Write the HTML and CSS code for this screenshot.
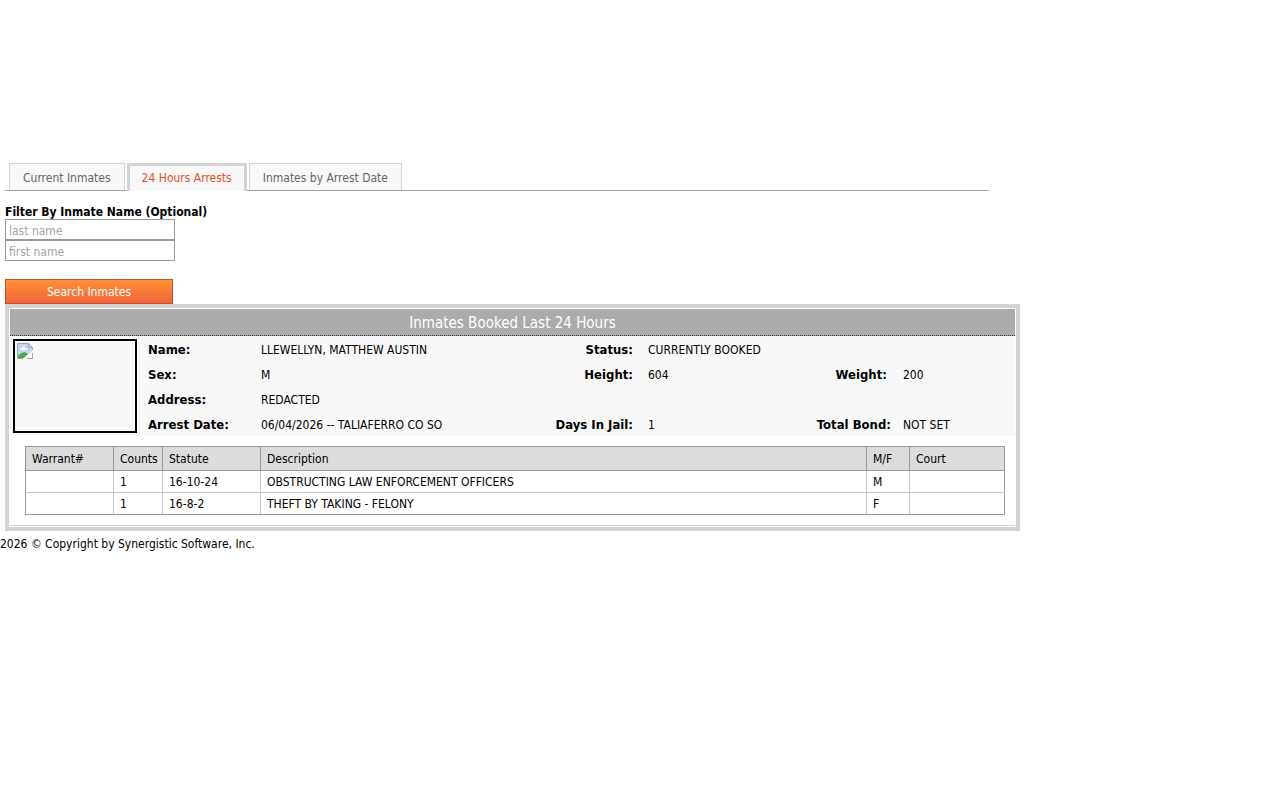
FILE: index.html
```html
<!DOCTYPE html>
<html lang="en">
<head>
    <meta charset="UTF-8">
    <meta name="viewport" content="width=device-width, initial-scale=1.0">
    <title>Inmates Booked Last 24 Hours</title>
    <link rel="stylesheet" href="styles.css">
</head>
<body>
    <main class="content">
        <nav class="tabs">
            <a class="tab" href="#current">Current Inmates</a>
            <a class="tab active" href="#arrests">24 Hours Arrests</a>
            <a class="tab" href="#bydate">Inmates by Arrest Date</a>
        </nav>

        <form class="filter">
            <label class="filter-title" for="lastName">Filter By Inmate Name (Optional)</label>
            <input type="text" id="lastName" name="lastName" placeholder="last name">
            <input type="text" id="firstName" name="firstName" placeholder="first name" aria-label="first name">
            <button class="search" type="submit">Search Inmates</button>
        </form>

        <section class="panel" id="arrests">
            <h1 class="panel-title">Inmates Booked Last 24 Hours</h1>

            <div class="inmate">
                <div class="photo">
                    <svg width="16" height="16" viewBox="0 0 16 16" role="img" aria-label="Photo">
                        <path d="M0.500 0.500H11.500L15.500 4.500V15.500H0.500Z" fill="#fff"/>
                        <path d="M1 1H11L15 5V9L8 15H1Z" fill="#c4d6f4"/>
                        <path d="M3 7C3 5 5 5 5 5C5 3 8 3 8 5C10 5 10 7 10 7Z" fill="#fff"/>
                        <path d="M1 15V13C4 9 8 8 11 11L7 15Z" fill="#51a844"/>
                        <path d="M6 16L16 7V10L10 16Z" fill="#f8f8f8"/>
                        <path d="M6 15.500H0.500V0.500H11.500L15.500 4.500V7M15.500 10V15.500H10M11.500 0.500V4.500H15.500" fill="none" stroke="#a5a5a5"/>
                    </svg>
                </div>
                <table class="details">
                    <colgroup>
                        <col class="col-label">
                        <col>
                        <col class="col-status">
                        <col class="col-value">
                        <col class="col-bond">
                        <col class="col-last">
                    </colgroup>
                    <tr>
                        <th>Name:</th>
                        <td>LLEWELLYN, MATTHEW AUSTIN</td>
                        <th class="right">Status:</th>
                        <td>CURRENTLY BOOKED</td>
                        <td></td>
                        <td></td>
                    </tr>
                    <tr>
                        <th>Sex:</th>
                        <td>M</td>
                        <th class="right">Height:</th>
                        <td>604</td>
                        <th class="right bond">Weight:&nbsp;</th>
                        <td>200</td>
                    </tr>
                    <tr>
                        <th>Address:</th>
                        <td colspan="5">REDACTED</td>
                    </tr>
                    <tr>
                        <th>Arrest Date:</th>
                        <td>06/04/2026 -- TALIAFERRO CO SO</td>
                        <th class="right">Days In Jail:</th>
                        <td>1</td>
                        <th class="right bond">Total Bond:</th>
                        <td>NOT SET</td>
                    </tr>
                </table>
            </div>

            <div class="charges-wrap">
                <table class="charges">
                    <thead>
                        <tr>
                            <th class="w-warrant">Warrant#</th>
                            <th class="w-counts">Counts</th>
                            <th class="w-statute">Statute</th>
                            <th>Description</th>
                            <th class="w-mf">M/F</th>
                            <th class="w-court">Court</th>
                        </tr>
                    </thead>
                    <tbody>
                        <tr>
                            <td></td>
                            <td>1</td>
                            <td>16-10-24</td>
                            <td>OBSTRUCTING LAW ENFORCEMENT OFFICERS</td>
                            <td>M</td>
                            <td></td>
                        </tr>
                        <tr>
                            <td></td>
                            <td>1</td>
                            <td>16-8-2</td>
                            <td>THEFT BY TAKING - FELONY</td>
                            <td>F</td>
                            <td></td>
                        </tr>
                    </tbody>
                </table>
            </div>
        </section>
    </main>

    <footer class="copyright">2026 © Copyright by Synergistic Software, Inc.</footer>
</body>
</html>
```

FILE: styles.css
```css
* {
    box-sizing: border-box;
}
body {
    margin: 0;
    font-family: Tahoma, "DejaVu Sans Condensed", "Noto Sans", sans-serif;
    font-size: 12px;
    line-height: 16px;
    color: #000;
    background-color: #fff;
}
.content {
    max-width: 1020px;
    padding: 163px 0 0 5px;
}

/* tabs */
.tabs {
    display: flex;
    gap: 2px;
    max-width: 984px;
    padding-left: 4px;
    border-bottom: 1px solid #a5a5a5;
}
.tab {
    padding: 6px 13px 4px;
    border: 1px solid #d3d3d3;
    border-bottom: none;
    background-color: #f8f8f8;
    color: #666;
    text-decoration: none;
}
.tab.active {
    margin-bottom: -1px;
    padding: 4px 12px 5px;
    border-width: 3px;
    color: #e8502f;
}

/* filter form */
.filter {
    display: flex;
    flex-direction: column;
    align-items: flex-start;
    padding-top: 14px;
}
.filter-title {
    font-weight: bold;
    line-height: 14px;
}
.filter input {
    width: 170px;
    height: 21px;
    padding: 2px 3px 0;
    border: 1px solid #999;
    font-family: inherit;
    font-size: 12px;
}
.filter input::placeholder {
    color: #a5a5a5;
}
.search {
    width: 168px;
    height: 25px;
    margin-top: 18px;
    border: 1px solid #c9502f;
    background: linear-gradient(#ff9236, #f0643c);
    color: #fff;
    font-family: inherit;
    font-size: 12px;
    cursor: pointer;
}

/* results */
.panel {
    padding: 1px 1px 0;
    border: 4px solid #d3d3d3;
}
.panel-title {
    margin: 0;
    padding: 5px 0 2px;
    border-bottom: 1px dotted #333;
    background-color: #ababab;
    color: #fff;
    font-size: 15px;
    line-height: 19px;
    font-weight: normal;
    text-align: center;
}
.inmate {
    display: flex;
    background-color: #f8f8f8;
}
.photo {
    flex: none;
    width: 124px;
    height: 94px;
    margin: 3px 0 0 3px;
    padding: 2px;
    border: 2px solid #000;
}
.photo svg {
    display: block;
}
.details {
    flex: 1;
    margin-left: 11px;
    border-collapse: collapse;
    table-layout: fixed;
}
.details th,
.details td {
    height: 25px;
    padding: 2px 0 0;
    text-align: left;
    white-space: nowrap;
}
.details th {
    font-size: 13px;
}
.details .right {
    padding-right: 15px;
    text-align: right;
}
.details .bond {
    padding-right: 12px;
}
.col-label {
    width: 113px;
}
.col-status {
    width: 110px;
}
.col-value {
    width: 130px;
}
.col-bond {
    width: 125px;
}
.col-last {
    width: 112px;
}
.charges-wrap {
    padding: 10px 10px 10px 15px;
    border-bottom: 1px solid #d3d3d3;
    margin-bottom: 1px;
}
.charges {
    width: 100%;
    border-collapse: collapse;
    table-layout: fixed;
}
.charges th,
.charges td {
    height: 22px;
    padding: 0 6px;
    border: 1px solid #c8c8c8;
    text-align: left;
    font-weight: normal;
}
.charges th {
    height: 24px;
    border-color: #999;
    background-color: #dcdcdc;
}
.charges td:first-child {
    border-left-color: #999;
}
.charges td:last-child {
    border-right-color: #999;
}
.charges tr:last-child td {
    border-bottom-color: #999;
}
.w-warrant {
    width: 88px;
}
.w-counts {
    width: 49px;
}
.w-statute {
    width: 98px;
}
.w-mf {
    width: 43px;
}
.w-court {
    width: 95px;
}

.copyright {
    padding-top: 5px;
}
```
